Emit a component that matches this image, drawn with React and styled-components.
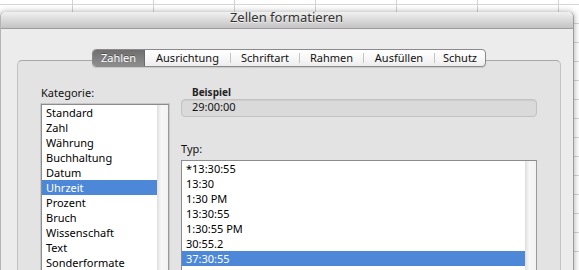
import React from "react";
import styled, { createGlobalStyle } from "styled-components";

const Global = createGlobalStyle`
  html, body { margin: 0; padding: 0; background: #fff; }
  body { font-family: "Noto Sans", "DejaVu Sans", sans-serif; -webkit-font-smoothing: antialiased; }
`;

const Screen = styled.div`
  width: 579px;
  height: 270px;
  overflow: hidden;
  background-color: #fff;
  background-image:
    linear-gradient(to right, #d2d2d2 1px, transparent 1px),
    linear-gradient(to bottom, #d6d6d6 1px, transparent 1px);
  background-size: 81px 19px;
  background-position: 72px 4px;
  padding-top: 12px;
  box-sizing: border-box;
`;

const Window = styled.div`
  width: 574px;
  height: 280px;
  box-sizing: border-box;
  background: #ececec;
  border-left: 1px solid #b4b4b4;
  border-right: 1px solid #9c9c9c;
  border-radius: 5px 5px 0 0;
  box-shadow: 0 0 6px rgba(0, 0, 0, 0.35);
  display: flex;
  flex-direction: column;
`;

const TitleBar = styled.div`
  height: 16px;
  flex: none;
  display: flex;
  justify-content: center;
  background: linear-gradient(to bottom, #f1f1f1 0%, #dcdcdc 45%, #c4c4c4 100%);
  border-bottom: 1px solid #9d9d9d;
  border-radius: 5px 5px 0 0;
`;

const Title = styled.div`
  font-size: 13px;
  line-height: 11px;
  color: #323232;
  text-shadow: 0 1px 0 rgba(255, 255, 255, 0.6);
  padding-right: 1px;
`;

const Body = styled.div`
  padding: 20px 0 0 16px;
`;

const TabArea = styled.div`
  width: 544px;
  display: flex;
  flex-direction: column;
  align-items: center;
`;

const Segments = styled.div`
  position: relative;
  z-index: 1;
  display: flex;
  align-items: center;
  height: 16px;
  border: 1px solid #8a8a8a;
  border-radius: 4px;
  overflow: hidden;
  background: linear-gradient(to bottom, #ffffff 0%, #f6f6f6 60%, #ededed 100%);
  box-shadow: 0 1px 1px rgba(0, 0, 0, 0.12);
  margin-bottom: -7px;
`;

const Segment = styled.div`
  width: ${(p) => p.$w}px;
  height: 16px;
  display: flex;
  align-items: center;
  justify-content: center;
  font-size: 11px;
  line-height: 16px;
  color: ${(p) => (p.$active ? "#fff" : "#111")};
  background: ${(p) =>
    p.$active ? "linear-gradient(to bottom, #6e6e6e 0%, #7f7f7f 50%, #8d8d8d 100%)" : "transparent"};
  text-shadow: ${(p) => (p.$active ? "0 -1px 0 rgba(0,0,0,0.35)" : "none")};
  border-right: ${(p) => (p.$active ? "1px solid #6a6a6a" : "none")};
  box-sizing: border-box;
`;

const Separator = styled.span`
  width: 1px;
  height: 10px;
  background: #c4c4c4;
  flex: none;
`;

const Panel = styled.div`
  width: 544px;
  height: 240px;
  box-sizing: border-box;
  background: #e3e3e3;
  border: 1px solid #c3c3c3;
  border-top-color: #a8a8a8;
  border-radius: 5px;
  padding: 25px 0 0 23px;
  display: flex;
  gap: 12px;
`;

const Column = styled.div`
  width: ${(p) => p.$w}px;
  display: flex;
  flex-direction: column;
`;

const Label = styled.div`
  font-size: 11px;
  line-height: 14px;
  color: #111;
  margin-top: ${(p) => p.$mt || 0}px;
  padding-left: ${(p) => p.$pl || 0}px;
`;

const BoxTitle = styled.div`
  font-size: 10px;
  font-weight: 700;
  line-height: 13px;
  color: #222;
  padding-left: 11px;
`;

const SampleBox = styled.div`
  height: 18px;
  box-sizing: border-box;
  background: #dadada;
  border: 1px solid #c2c2c2;
  border-radius: 4px;
  box-shadow: inset 0 1px 1px rgba(0, 0, 0, 0.06);
  padding: 0 0 3px 10px;
  font-size: 11px;
  line-height: 13px;
  color: #111;
`;

const List = styled.div`
  margin-top: 4px;
  height: 200px;
  box-sizing: border-box;
  display: flex;
  background: #fff;
  border: 1px solid #8c8c8c;
  border-right-color: #9a9a9a;
  box-shadow: ${(p) => (p.$focus ? "0 0 0 1px rgba(0,0,0,0.12)" : "none")};
`;

const Rows = styled.div`
  flex: 1;
  display: flex;
  flex-direction: column;
`;

const Row = styled.div`
  height: 15px;
  flex: none;
  padding-left: 4px;
  font-size: 11px;
  line-height: 15px;
  white-space: nowrap;
  color: ${(p) => (p.$sel ? "#fff" : "#000")};
  background: ${(p) => (p.$sel ? "#4d87d8" : "transparent")};
`;

const Track = styled.div`
  width: 11px;
  flex: none;
  background: linear-gradient(to right, #e6e6e6 0%, #f7f7f7 35%, #f3f3f3 100%);
  border-left: 1px solid #e0e0e0;
  box-sizing: border-box;
`;

const tabs = [
  { t: "Zahlen", w: 52, active: true },
  { t: "Ausrichtung", w: 85 },
  { t: "Schriftart", w: 68, sep: true },
  { t: "Rahmen", w: 63, sep: true },
  { t: "Ausfüllen", w: 70, sep: true },
  { t: "Schutz", w: 50, sep: true },
];

const categories = [
  "Standard",
  "Zahl",
  "Währung",
  "Buchhaltung",
  "Datum",
  "Uhrzeit",
  "Prozent",
  "Bruch",
  "Wissenschaft",
  "Text",
  "Sonderformate",
];

const types = [
  "*13:30:55",
  "13:30",
  "1:30 PM",
  "13:30:55",
  "1:30:55 PM",
  "30:55.2",
  "37:30:55",
  "14.3.01 1:30 PM",
  "14.3.01 13:30",
];

export default function App() {
  return (
    <>
      <Global />
      <Screen>
        <Window>
          <TitleBar>
            <Title>Zellen formatieren</Title>
          </TitleBar>
          <Body>
            <TabArea>
              <Segments>
                {tabs.map((tab) => (
                  <React.Fragment key={tab.t}>
                    {tab.sep && <Separator />}
                    <Segment $w={tab.w} $active={tab.active}>
                      {tab.t}
                    </Segment>
                  </React.Fragment>
                ))}
              </Segments>
              <Panel>
                <Column $w={128}>
                  <Label>Kategorie:</Label>
                  <List $focus>
                    <Rows>
                      {categories.map((c) => (
                        <Row key={c} $sel={c === "Uhrzeit"}>
                          {c}
                        </Row>
                      ))}
                    </Rows>
                    <Track />
                  </List>
                </Column>
                <Column $w={356}>
                  <BoxTitle>Beispiel</BoxTitle>
                  <SampleBox>29:00:00</SampleBox>
                  <Label $mt={25}>Typ:</Label>
                  <List>
                    <Rows>
                      {types.map((t, i) => (
                        <Row key={i} $sel={i === 6}>
                          {t}
                        </Row>
                      ))}
                    </Rows>
                    <Track />
                  </List>
                </Column>
              </Panel>
            </TabArea>
          </Body>
        </Window>
      </Screen>
    </>
  );
}
